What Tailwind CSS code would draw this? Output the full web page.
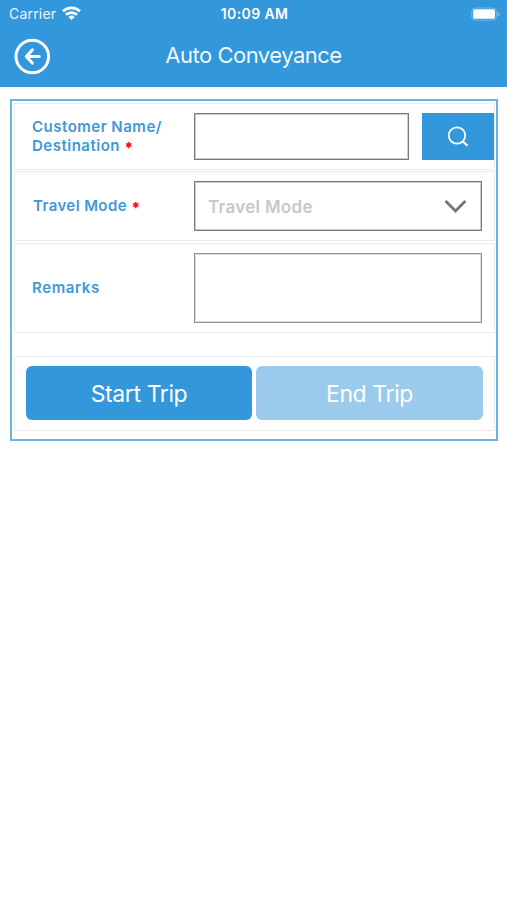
<!DOCTYPE html>
<html lang="en">
<head>
<meta charset="utf-8">
<title>Auto Conveyance</title>
<script src="https://cdn.jsdelivr.net/npm/@tailwindcss/browser@4"></script>
</head>
<body class="bg-white font-['Inter','Liberation_Sans',sans-serif]">
<header class="h-[87px] bg-[#3297db] text-white">
  <div class="grid h-[27px] grid-cols-3 items-center pl-[9px] pr-[7px]">
    <div class="flex items-center gap-[6px]">
      <span class="mb-[2px] text-[14px] leading-[25px] tracking-[0.2px] text-white/90">Carrier</span>
      <svg class="mb-[2px] h-[14px] w-[19px]" viewBox="0 0 19 14" fill="none" stroke="#fff" stroke-width="2.8"><path d="M1 5.3a12.3 12.3 0 0 1 17 0"/><path d="M4 8.8a8 8 0 0 1 11 0"/><path d="M9.5 14 6.4 10.9a4.4 4.4 0 0 1 6.2 0z" fill="#fff" stroke="none"/></svg>
    </div>
    <span class="whitespace-nowrap text-center text-[14px] font-semibold leading-[28px] tracking-[0.4px]">10:09 AM</span>
    <svg class="mb-[1px] h-[14px] w-[29px] justify-self-end" viewBox="0 0 30 14"><rect x=".8" y=".8" width="25.4" height="12.6" rx="3.6" fill="none" stroke="#fff" stroke-opacity=".35"/><rect x="2.2" y="2.2" width="22.6" height="9.8" rx="2" fill="#fff"/><path d="M27.6 5v4.4c1.6-.6 1.9-1.3 1.9-2.2S29 5.6 27.6 5z" fill="#fff" fill-opacity=".4"/></svg>
  </div>
  <div class="grid h-[60px] grid-cols-[40px_1fr_54px] pl-[14px]">
    <svg class="mt-[11px] h-[37px] w-[37px]" viewBox="0 0 37 37" fill="none" stroke="#fff"><circle cx="18.3" cy="18.5" r="16.3" stroke-width="3"/><path d="M25.2 18.5H12.5M18.3 12l-6 6.500 6 6.500" stroke-width="3.2" stroke-linecap="round" stroke-linejoin="round"/></svg>
    <h1 class="whitespace-nowrap text-center text-[22px] font-normal leading-[56px] tracking-[-0.5px] text-white/95">Auto Conveyance</h1>
  </div>
</header>
<main class="ml-[10px] mt-[12px] flex h-[342px] w-[488px] flex-col border-2 border-[#6cb3e4] px-[2px] pt-[2px]">
  <div class="flex h-[67px] w-[481px] shrink-0 border border-[#e9ebec]">
    <div class="w-[179px] pl-[17px] pt-[13px] text-[15px] font-semibold leading-[19px] tracking-[0.5px] text-[#3f98d8]">Customer Name/<br>Destination <span class="align-[-2px] text-[15px] font-black leading-none text-[#f5101c]">*</span></div>
    <div class="mt-[9px] h-[47px] w-[215px] shrink-0 border border-[#777] outline-1 -outline-offset-2 outline-[#ccc]"></div>
    <div class="ml-[13px] mt-[9px] flex h-[47px] w-[72px] shrink-0 items-center justify-center bg-[#3297db]">
      <svg class="h-[22px] w-[22px]" viewBox="0 0 22 22" fill="none" stroke="#fff" stroke-width="1.8"><circle cx="10" cy="9.500" r="8.2"/><path d="m15.4 15 5.1 4.7" stroke-width="2.2"/></svg>
    </div>
  </div>
  <div class="mt-[1px] flex h-[70px] w-[481px] shrink-0 border border-[#e9ebec]">
    <div class="w-[179px] pl-[18px] text-[15px] font-semibold leading-[68px] tracking-[0.4px] text-[#3f98d8]">Travel Mode <span class="align-[-2px] text-[15px] font-black leading-none text-[#f5101c]">*</span></div>
    <div class="mt-[9px] flex h-[50px] w-[288px] shrink-0 items-center justify-between border border-[#777] pl-[13px] pr-[14px] outline-1 -outline-offset-2 outline-[#ccc]">
      <span class="pt-[3px] text-[17px] font-semibold tracking-[0.3px] text-[#c8c8c8]">Travel Mode</span>
      <svg class="h-[14px] w-[23px]" viewBox="0 0 23 14" fill="none" stroke="#777" stroke-width="2.9"><path d="m1.6 1.9 9.900 10 9.900-10"/></svg>
    </div>
  </div>
  <div class="mt-[2px] flex h-[90px] w-[481px] shrink-0 border border-[#e9ebec]">
    <div class="w-[179px] pl-[17px] text-[15px] font-semibold leading-[87px] tracking-[0.6px] text-[#3f98d8]">Remarks</div>
    <div class="mt-[9px] h-[70px] w-[288px] shrink-0 border border-[#8f8f8f] outline-1 -outline-offset-2 outline-[#ddd]"></div>
  </div>
  <div class="mt-[23px] flex h-[75px] w-[481px] shrink-0 gap-[4px] border border-[#e9ebec] pl-[11px] pt-[9px] text-center text-[23px] leading-[56px] tracking-[-0.4px] text-white">
    <div class="h-[54px] w-[226px] rounded-[6px] bg-[#3297db]">Start Trip</div>
    <div class="h-[54px] w-[227px] rounded-[6px] bg-[#9acaec]">End Trip</div>
  </div>
</main>
</body>
</html>
